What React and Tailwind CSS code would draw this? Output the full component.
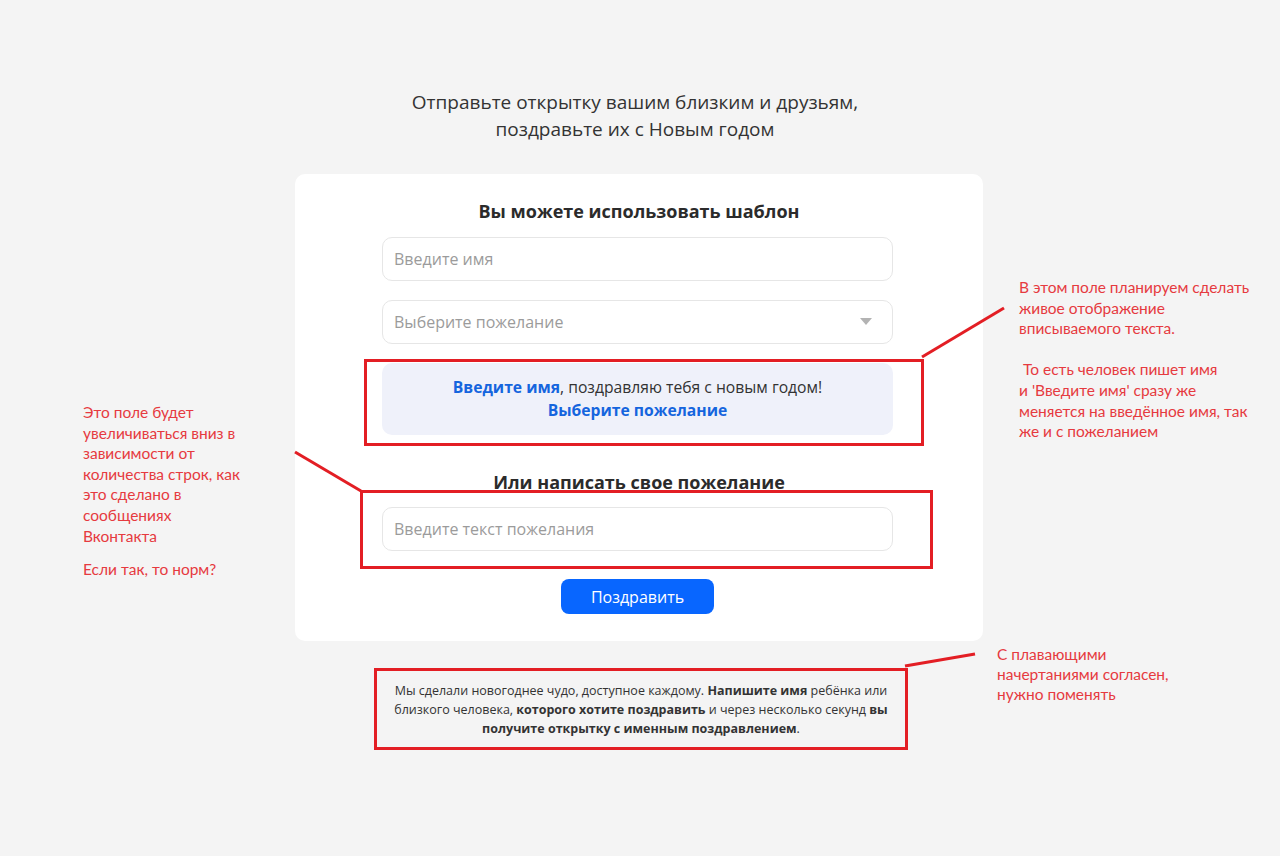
import React from 'react';

const RED = 'border-[#e31e24]';

const Field = ({ placeholder, select }) => (
  <div className="flex items-center justify-between h-[44px] w-[511px] rounded-[10px] border border-[#e6e6e6] bg-white px-[11px]">
    <span className="text-[16px] text-[#9b9b9b]">{placeholder}</span>
    {select && (
      <svg width="12" height="8" viewBox="0 0 12 8" className="mr-[9px]">
        <path d="M0 0 H12 L6 7 Z" fill="#b3b3b3" />
      </svg>
    )}
  </div>
);

const App = () => {
  return (
    <div className="relative min-h-[856px] w-full bg-[#f4f4f4] font-['Open_Sans',sans-serif] overflow-hidden">
      {/* Main column */}
      <div className="flex flex-col items-center pt-[89px]">
        <h1 className="text-center text-[19px] leading-[27px] text-[#333] mb-[31px] mr-[10px]">
          Отправьте открытку вашим близким и друзьям,
          <br />
          поздравьте их с Новым годом
        </h1>

        {/* Card */}
        <div className="w-[688px] mr-[2px] rounded-[10px] bg-white pt-[23px] pb-[27px] px-[87px] flex flex-col">
          <h2 className="text-center text-[18px] leading-[28px] font-bold text-[#2b2b2b]">
            Вы можете использовать шаблон
          </h2>

          <div className="mt-[12px] flex flex-col gap-[19px]">
            <Field placeholder="Введите имя" />
            <Field placeholder="Выберите пожелание" select />

            {/* Live preview */}
            <div className="relative w-[511px]">
              <div className="h-[72px] rounded-[10px] bg-[#eff1fa] flex flex-col items-center justify-center text-[15.7px] leading-[23px] text-[#333]">
                <p>
                  <span className="font-bold text-[#1565de]">Введите имя</span>, поздравляю тебя с новым годом!
                </p>
                <p className="font-bold text-[#1565de]">Выберите пожелание</p>
              </div>
              <div className={`absolute left-[-18px] right-[-31px] top-[-4px] bottom-[-11px] border-[3px] ${RED} pointer-events-none`} />
            </div>
          </div>

          <h2 className="mt-[33px] text-center text-[18px] leading-[28px] font-bold text-[#2b2b2b]">
            Или написать свое пожелание
          </h2>

          <div className="relative mt-[11px] w-[511px]">
            <Field placeholder="Введите текст пожелания" />
            <div className={`absolute left-[-22px] right-[-40px] top-[-17px] bottom-[-18px] border-[3px] ${RED} pointer-events-none`} />
          </div>

          <button className="mt-[28px] ml-[179px] h-[35px] w-[153px] rounded-[8px] bg-[#0866ff] text-white text-[16px]">
            Поздравить
          </button>
        </div>

        {/* Footer text */}
        <div className="relative mt-[40px] mr-[4px]">
          <p className="text-center text-[12.5px] leading-[19px] text-[#333] ml-[6px]">
            Мы сделали новогоднее чудо, доступное каждому. <b>Напишите имя</b> ребёнка или
            <br />
            близкого человека, <b>которого хотите поздравить</b> и через несколько секунд <b>вы</b>
            <br />
            <b>получите открытку с именным поздравлением</b>.
          </p>
          <div className={`absolute left-[-14px] right-[-20px] top-[-13px] bottom-[-12px] border-[3px] ${RED} pointer-events-none`} />
        </div>
      </div>

      {/* Annotation connector lines */}
      <svg className="absolute inset-0 pointer-events-none" width="1280" height="856">
        <line x1="922" y1="357" x2="1004" y2="308" stroke="#e31e24" strokeWidth="3" />
        <line x1="295" y1="452" x2="361" y2="491" stroke="#e31e24" strokeWidth="3" />
        <line x1="905" y1="666" x2="975" y2="654" stroke="#e31e24" strokeWidth="3" />
      </svg>

      {/* Annotation notes */}
      <div className="absolute left-[83px] top-[402px] font-['Lato',sans-serif] text-[15.5px] leading-[20.6px] text-[#e63a3f]">
        <p>
          Это поле будет
          <br />
          увеличиваться вниз в
          <br />
          зависимости от
          <br />
          количества строк, как
          <br />
          это сделано в
          <br />
          сообщениях
          <br />
          Вконтакта
        </p>
        <p className="mt-[13px]">Если так, то норм?</p>
      </div>

      <div className="absolute left-[1019px] top-[277px] font-['Lato',sans-serif] text-[15.5px] leading-[20.6px] text-[#e63a3f] whitespace-pre">
        <p>
          В этом поле планируем сделать
          <br />
          живое отображение
          <br />
          вписываемого текста.
        </p>
        <p className="mt-[20.6px]">
          {' То есть человек пишет имя'}
          <br />
          и 'Введите имя' сразу же
          <br />
          меняется на введённое имя, так
          <br />
          же и с пожеланием
        </p>
      </div>

      <div className="absolute left-[997px] top-[644px] font-['Lato',sans-serif] text-[15.5px] leading-[20px] text-[#e63a3f]">
        С плавающими
        <br />
        начертаниями согласен,
        <br />
        нужно поменять
      </div>
    </div>
  );
};

export default App;
